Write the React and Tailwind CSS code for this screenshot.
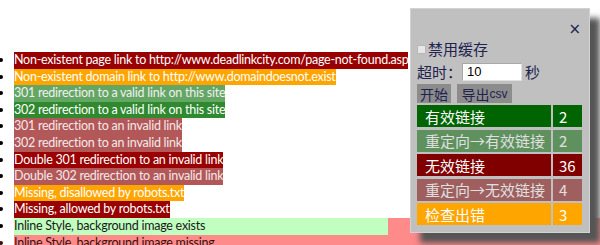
import React from "react";

const rows = [
  { t: "Non-existent page link to http://www.deadlinkcity.com/page-not-found.asp", c: "bg-[#990000] text-white" },
  { t: "Non-existent domain link to http://www.domaindoesnot.exist", c: "bg-[#ffa500] text-white" },
  { t: "301 redirection to a valid link on this site", c: "bg-[#64a664] text-[#f0f0f0]" },
  { t: "302 redirection to a valid link on this site", c: "bg-[#2f892f] text-white" },
  { t: "301 redirection to an invalid link", c: "bg-[#b35858] text-[#f4e8e8]" },
  { t: "302 redirection to an invalid link", c: "bg-[#b35858] text-[#f4e8e8]" },
  { t: "Double 301 redirection to an invalid link", c: "bg-[#9b0000] text-white" },
  { t: "Double 302 redirection to an invalid link", c: "bg-[#b35858] text-[#f4e8e8]" },
  { t: "Missing, disallowed by robots.txt", c: "bg-[#ffa500] text-white" },
  { t: "Missing, allowed by robots.txt", c: "bg-[#990000] text-white" },
];

const stats = [
  { label: "有效链接", n: "2", c: "bg-[#006400] text-white", dim: false },
  { label: "重定向→有效链接", n: "2", c: "bg-[#006400] text-white", dim: true },
  { label: "无效链接", n: "36", c: "bg-[#800000] text-white", dim: false },
  { label: "重定向→无效链接", n: "4", c: "bg-[#800000] text-white", dim: true },
  { label: "检查出错", n: "3", c: "bg-[#ffa500] text-white", dim: false },
];

export default function App() {
  return (
    <div className="relative w-[600px] h-[245px] overflow-hidden bg-white">
      <ul className="list-disc pl-[14px] pt-[52px] font-['Lato',sans-serif] text-[12.5px] tracking-[-0.25px] leading-[16.6px] text-black">
        {rows.map((r, i) => (
          <li key={i}>
            <span className={"inline-block " + r.c}>{r.t}</span>
          </li>
        ))}
        <li className="bg-[#ff8a8a]">
          <span className="inline-block w-[374px] bg-[#c0ffc0] text-[#1a1a1a]">Inline Style, background image exists</span>
        </li>
        <li className="bg-[#ff8a8a] text-[#3a1010]">Inline Style, background image missing</li>
      </ul>

      <div className="absolute left-[410px] top-[8px] w-[180px] h-[225px] bg-[#c0c0c0] border border-[#d2d2d2] shadow-[10px_10px_6px_#555] pl-[6px] pr-[7px] font-['Noto_Sans_CJK_SC',sans-serif] text-[#22224f]">
        <div className="flex h-[31px] items-end justify-end pb-[3px] pr-[1px]">
          <span className="text-[15px] leading-none font-['DejaVu_Sans',sans-serif]">×</span>
        </div>
        <div className="flex h-[18px] items-center">
          <span className="mr-[2px] inline-block h-[9px] w-[9px] border border-[#b8b8b8] bg-[#e6e6e6]"></span>
          <span className="text-[15px] leading-[18px]">禁用缓存</span>
        </div>
        <div className="mt-[2px] flex h-[24px] items-center">
          <span className="text-[15px] leading-[18px]">超时：</span>
          <span className="flex h-[18px] w-[60px] items-center border border-[#a8a8a8] border-b-[#e0e0e0] border-r-[#e0e0e0] bg-white pl-[4px] font-['Liberation_Sans',sans-serif] text-[13px] text-black">10</span>
          <span className="ml-[3px] text-[15px] leading-[18px]">秒</span>
        </div>
        <div className="flex h-[19px] gap-[6px]">
          <span className="flex w-[34px] items-center justify-center bg-[#8c8c8c] text-[14px] leading-none">开始</span>
          <span className="flex w-[55px] items-center justify-center bg-[#8c8c8c] text-[14px] leading-none">
            导出<span className="font-['Liberation_Sans',sans-serif] text-[12px]">csv</span>
          </span>
        </div>
        <div className="mt-[2px] flex flex-col gap-[2.5px]">
          {stats.map((s, i) => (
            <div key={i} className={s.dim ? "flex h-[22px] gap-[2px] opacity-50" : "flex h-[22px] gap-[2px]"}>
              <div className={"flex w-[134px] items-center pl-[8px] text-[15px] leading-none " + s.c}>{s.label}</div>
              <div className={"flex flex-1 items-center pl-[6px] text-[15px] leading-none " + s.c}>{s.n}</div>
            </div>
          ))}
        </div>
      </div>
    </div>
  );
}
